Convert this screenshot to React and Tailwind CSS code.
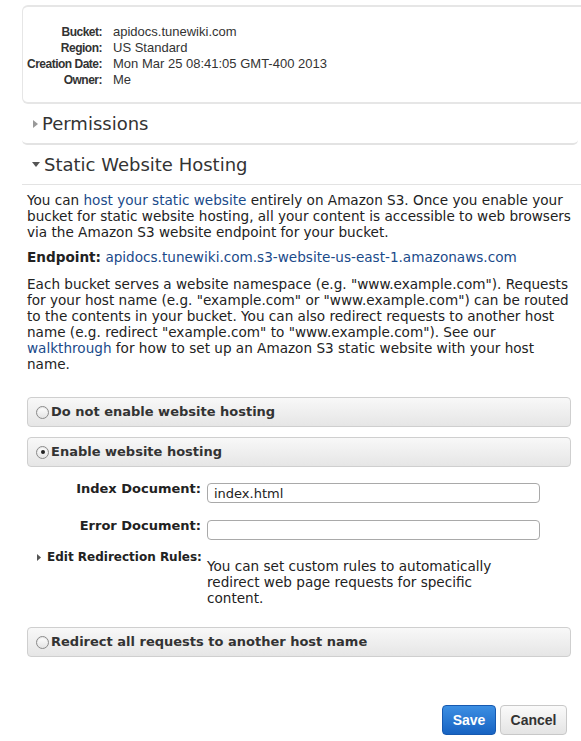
import React from 'react';

const props = [
  ['Bucket:', 'apidocs.tunewiki.com'],
  ['Region:', 'US Standard'],
  ['Creation Date:', 'Mon Mar 25 08:41:05 GMT-400 2013'],
  ['Owner:', 'Me'],
];

const verdana = { fontFamily: '"DejaVu Sans", Verdana, sans-serif' };
const helv = { fontFamily: '"Liberation Sans", Arial, sans-serif' };

const Radio = ({ checked }) => (
  <span className="w-[13px] h-[13px] rounded-full border border-[#8a8a8a] bg-gradient-to-b from-white to-[#e4e4e4] flex items-center justify-center shrink-0 shadow-[inset_0_1px_1px_rgba(0,0,0,0.1)]">
    {checked && <span className="w-[4px] h-[4px] rounded-full bg-[#222]" />}
  </span>
);

const OptionBar = ({ label, checked }) => (
  <div className="h-[30px] rounded-[4px] border border-[#cfcfcf] bg-gradient-to-b from-[#f8f8f8] to-[#e6e6e6] flex items-center pl-[8px] gap-[2px]">
    <Radio checked={checked} />
    <span className="text-[13px] font-bold text-[#333]" style={verdana}>{label}</span>
  </div>
);

const Field = ({ label, value }) => (
  <div className="flex items-start">
    <div className="w-[180px] text-right text-[13px] font-bold text-[#222] pr-[6px] leading-[16px] whitespace-nowrap" style={verdana}>
      {label}
    </div>
    <input
      defaultValue={value}
      className="mt-[2px] w-[333px] h-[20px] rounded-[4px] border border-[#a9a9a9] px-[6px] text-[13px] text-[#222] outline-none"
      style={verdana}
    />
  </div>
);

export default function App() {
  return (
    <div className="bg-white w-[581px] h-[741px] overflow-hidden pl-[22px]">
      {/* bucket properties card */}
      <div className="mt-[5px] h-[99px] rounded-l-[6px] border-t-2 border-l border-b-2 border-[#e6e6e6] border-r-0 pt-[17px]" style={helv}>
        {props.map(([k, v]) => (
          <div key={k} className="flex leading-[16px]">
            <div className="w-[79px] text-[12px] tracking-[-0.5px] font-bold text-[#333] whitespace-nowrap flex justify-end">{k}</div>
            <div className="pl-[11px] text-[13px] text-[#333]">{v}</div>
          </div>
        ))}
      </div>

      {/* permissions */}
      <div className="mr-[3px] h-[41px] rounded-b-[5px] border-b-2 border-[#e3e3e3] flex items-center pl-[11px] gap-[4px]" style={verdana}>
        <svg width="5" height="8" viewBox="0 0 5 8"><path d="M0 0 L5 4 L0 8 Z" fill="#999" /></svg>
        <span className="text-[18px] text-[#333]">Permissions</span>
      </div>

      {/* static website hosting header */}
      <div className="h-[40px] border-b border-[#e3e3e3] flex items-center pl-[10px] gap-[4px]" style={verdana}>
        <svg width="8" height="5" viewBox="0 0 8 5"><path d="M0 0 L8 0 L4 5 Z" fill="#555" /></svg>
        <span className="text-[18px] text-[#333]">Static Website Hosting</span>
      </div>

      <div className="pl-[5px] pr-[6px] text-[13.6px] leading-[16px] text-[#222]" style={verdana}>
        <p className="mt-[7px]">
          You can <span className="text-[#1a4a8a]">host your static website</span> entirely on Amazon S3. Once you enable your bucket for static website hosting, all your content is accessible to web browsers via the Amazon S3 website endpoint for your bucket.
        </p>
        <p className="mt-[9px]">
          <span className="font-bold">Endpoint:</span>{' '}
          <span className="text-[#1a4a8a]">apidocs.tunewiki.com.s3-website-us-east-1.amazonaws.com</span>
        </p>
        <p className="mt-[11px]">
          Each bucket serves a website namespace (e.g. "www.example.com"). Requests for your host name (e.g. "example.com" or "www.example.com") can be routed to the contents in your bucket. You can also redirect requests to another host name (e.g. redirect "example.com" to "www.example.com"). See our{' '}
          <span className="text-[#1a4a8a]">walkthrough</span> for how to set up an Amazon S3 static website with your host name.
        </p>

        <div className="mt-[25px] mr-[4px] flex flex-col gap-[10px]">
          <OptionBar label="Do not enable website hosting" />
          <OptionBar label="Enable website hosting" checked />
        </div>

        <div className="mt-[14px] flex flex-col gap-[15px]">
          <Field label="Index Document:" value="index.html" />
          <Field label="Error Document:" value="" />
        </div>

        <div className="mt-[9px] flex items-start">
          <div className="w-[180px] shrink-0 flex items-center pl-[10px] gap-[6px] whitespace-nowrap">
            <svg className="shrink-0" width="4" height="7" viewBox="0 0 4 7"><path d="M0 0 L4 3.5 L0 7 Z" fill="#555" /></svg>
            <span className="font-bold text-[#222] text-[12px] leading-[16px]">Edit Redirection Rules:</span>
          </div>
          <p className="mt-[9px] w-[300px]">
            You can set custom rules to automatically redirect web page requests for specific content.
          </p>
        </div>

        <div className="mt-[21px] mr-[4px]">
          <OptionBar label="Redirect all requests to another host name" />
        </div>

        <div className="mt-[48px] flex justify-end gap-[4px] pr-[8px]" style={helv}>
          <button className="w-[54px] h-[30px] rounded-[4px] border border-[#1659b0] bg-gradient-to-b from-[#3c8fe3] to-[#1763c2] text-white text-[14px] font-bold">
            Save
          </button>
          <button className="w-[67px] h-[30px] rounded-[4px] border border-[#c8c8c8] bg-gradient-to-b from-[#fafafa] to-[#e4e4e4] text-[#333] text-[14px] font-bold">
            Cancel
          </button>
        </div>
      </div>
    </div>
  );
}
